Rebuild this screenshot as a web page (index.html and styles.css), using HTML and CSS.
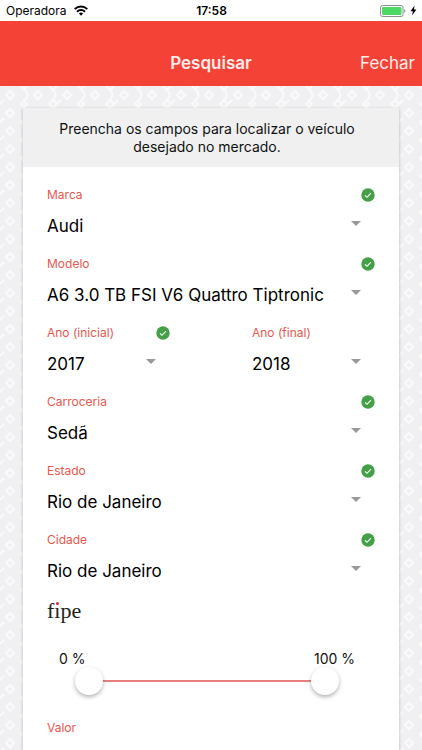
FILE: index.html
```html
<!DOCTYPE html>
<html lang="pt-BR">
<head>
    <meta charset="UTF-8">
    <meta name="viewport" content="width=device-width, initial-scale=1.0">
    <title>Pesquisar</title>
    <link rel="stylesheet" href="styles.css">
</head>
<body>
    <svg class="sprite" aria-hidden="true">
        <symbol id="check" viewBox="0 0 14 14">
            <circle cx="7" cy="7" r="6.7" fill="#43a047"/>
            <path d="M4 7.3l2 2 4-4.2" fill="none" stroke="#fff" stroke-width="1.1"/>
        </symbol>
    </svg>

    <div class="status-bar">
        <div class="carrier">
            <span>Operadora</span>
            <svg width="14" height="11" viewBox="0 0 14 11">
                <g fill="none" stroke="#000" stroke-width="2">
                    <path d="M.7 4.1a9 9 0 0 1 12.6 0"/>
                    <path d="M3 6.7a5.7 5.7 0 0 1 8 0"/>
                </g>
                <path d="M4.9 8.6a3 3 0 0 1 4.2 0L7 10.8z"/>
            </svg>
        </div>
        <span class="clock">17:58</span>
        <div class="power">
            <svg width="26" height="12" viewBox="0 0 26 12">
                <rect x=".5" y=".5" width="22.5" height="11" rx="2" fill="#fff" stroke="#8e8e8e"/>
                <rect x="2" y="2" width="19.5" height="8" rx="1" fill="#4cd964"/>
                <path d="M24.2 4v4q1.2-.6 1.2-2t-1.2-2z" fill="#8e8e8e"/>
            </svg>
            <svg width="7" height="11" viewBox="0 0 7 11">
                <path d="M4.6.5L.5 6.2h2.4L2 10.5l4.4-6H3.9z"/>
            </svg>
        </div>
    </div>

    <header class="navbar">
        <h1>Pesquisar</h1>
        <button type="button" class="close">Fechar</button>
    </header>

    <main>
        <form class="card">
            <p class="intro">Preencha os campos para localizar o veículo desejado no mercado.</p>
            <div class="fields">
                <div class="field">
                    <label for="marca">Marca</label>
                    <svg class="check"><use href="#check"/></svg>
                    <select id="marca"><option>Audi</option></select>
                </div>
                <div class="field">
                    <label for="modelo">Modelo</label>
                    <svg class="check"><use href="#check"/></svg>
                    <select id="modelo"><option>A6 3.0 TB FSI V6 Quattro Tiptronic</option></select>
                </div>
                <div class="field-row">
                    <div class="field">
                        <label for="ano-inicial">Ano (inicial)</label>
                        <svg class="check"><use href="#check"/></svg>
                        <select id="ano-inicial"><option>2017</option></select>
                    </div>
                    <div class="field">
                        <label for="ano-final">Ano (final)</label>
                        <select id="ano-final"><option>2018</option></select>
                    </div>
                </div>
                <div class="field">
                    <label for="carroceria">Carroceria</label>
                    <svg class="check"><use href="#check"/></svg>
                    <select id="carroceria"><option>Sedã</option></select>
                </div>
                <div class="field">
                    <label for="estado">Estado</label>
                    <svg class="check"><use href="#check"/></svg>
                    <select id="estado"><option>Rio de Janeiro</option></select>
                </div>
                <div class="field">
                    <label for="cidade">Cidade</label>
                    <svg class="check"><use href="#check"/></svg>
                    <select id="cidade"><option>Rio de Janeiro</option></select>
                </div>
            </div>

            <div class="fipe">f<span class="fipe-i">ı</span>pe</div>
            <div class="range-labels">
                <label for="fipe-min">0 %</label>
                <label for="fipe-max">100 %</label>
            </div>
            <div class="range">
                <input type="range" id="fipe-min" min="0" max="100" value="0">
                <input type="range" id="fipe-max" min="0" max="100" value="100">
            </div>

            <div class="section-label">Valor</div>
        </form>
    </main>
</body>
</html>
```
FILE: styles.css
```css
* {
    box-sizing: border-box;
    margin: 0;
    padding: 0;
}

body {
    display: flex;
    flex-direction: column;
    min-height: 100vh;
    font-family: Inter, "Liberation Sans", sans-serif;
    color: #111;
    background: #fff;
}
.sprite {
    position: absolute;
    width: 0;
    height: 0;
}

/* Status bar */
.status-bar {
    display: grid;
    grid-template-columns: 1fr auto 1fr;
    align-items: center;
    height: 21px;
    padding: 0 5px 0 6px;
    font-size: 12px;
    color: #000;
}
.carrier,
.power {
    display: flex;
    align-items: center;
    gap: 7px;
}
.power {
    justify-content: flex-end;
    gap: 4px;
}
.clock {
    font-weight: 600;
}

/* Navigation */
.navbar {
    display: grid;
    grid-template-columns: 1fr auto 1fr;
    align-items: end;
    height: 65px;
    padding: 0 7px 11px;
    background: #f44336;
    color: #ffeceb;
}
.navbar h1 {
    grid-column: 2;
    font-size: 17px;
    font-weight: 600;
    line-height: 24px;
}
.close {
    justify-self: end;
    border: 0;
    background: none;
    font: 17px/24px Inter, "Liberation Sans", sans-serif;
    color: inherit;
}

main {
    flex: 1;
    display: flex;
    padding: 22px 23px 0;
    background: #f0f0f2 url("data:image/svg+xml,%3Csvg xmlns='http://www.w3.org/2000/svg' width='57' height='18'%3E%3Cg fill='none' stroke='%23fafafb' stroke-width='2'%3E%3Cpath d='M10 5l4 4-4 4-4-4zM38 5l4 4-4 4-4-4z'/%3E%3Cpath d='M20-1l6 6q3 4 0 8l-6 6M28-1l-5 5M28 19l-5-5M48-1l6 6q3 4 0 8l-6 6M57 0l-5 5M57 18l-5-5M0 0l4-4M0 18l4-4'/%3E%3C/g%3E%3C/svg%3E");
}
.card {
    flex: 1;
    min-width: 0;
    padding-bottom: 14px;
    background: #fff;
    box-shadow: 0 1px 3px rgb(0 0 0 / 0.25);
}
.intro {
    padding: 12px 36px 11px 28px;
    background: #f0f0f0;
    font-size: 14px;
    line-height: 18px;
    text-align: center;
}

/* Fields */
.fields {
    display: grid;
    gap: 18px;
    padding: 20px 24px 0;
}
.field-row {
    display: grid;
    grid-template-columns: 1fr 1fr;
    gap: 82px;
}
.field {
    display: grid;
    grid-template-columns: 1fr auto;
    align-items: center;
    row-gap: 11px;
}
.field label,
.section-label {
    font-size: 12px;
    line-height: 16px;
    color: #e8574d;
}
.check {
    width: 14px;
    height: 14px;
}
.field select {
    grid-column: 1 / -1;
    width: 100%;
    height: 24px;
    padding-right: 28px;
    border: 0;
    appearance: none;
    background: url("data:image/svg+xml,%3Csvg xmlns='http://www.w3.org/2000/svg' width='10' height='5'%3E%3Cpath d='M0 0h10L5 5z' fill='%23999'/%3E%3C/svg%3E") no-repeat right 14px top 7px;
    font: 17px/24px Inter, "Liberation Sans", sans-serif;
    color: #000;
}

/* Fipe range */
.fipe {
    margin: 16px 24px 0;
    font: 22px/24px "Liberation Serif", serif;
    color: #222;
}
.fipe-i {
    position: relative;
}
.fipe-i::before {
    content: "";
    position: absolute;
    top: 4px;
    left: 2px;
    width: 3px;
    height: 3px;
    border-radius: 50%;
    background: #d6203c;
}
.range-labels {
    display: flex;
    justify-content: space-between;
    margin: 28px 44px 0 36px;
    font-size: 14px;
    line-height: 16px;
}
.range {
    display: grid;
    height: 28px;
    margin: 0 60px 0 52px;
    background: linear-gradient(#e57f79, #e57f79) center / calc(100% - 28px) 2px no-repeat;
}
.range input {
    grid-area: 1 / 1;
    width: 100%;
    height: 28px;
    appearance: none;
    background: none;
    pointer-events: none;
}
.range input::-webkit-slider-thumb {
    width: 28px;
    height: 28px;
    border-radius: 50%;
    appearance: none;
    background: #fff;
    box-shadow: 0 2px 4px rgb(0 0 0 / 0.3);
    pointer-events: auto;
}
.section-label {
    margin: 25px 24px 0;
}
```
